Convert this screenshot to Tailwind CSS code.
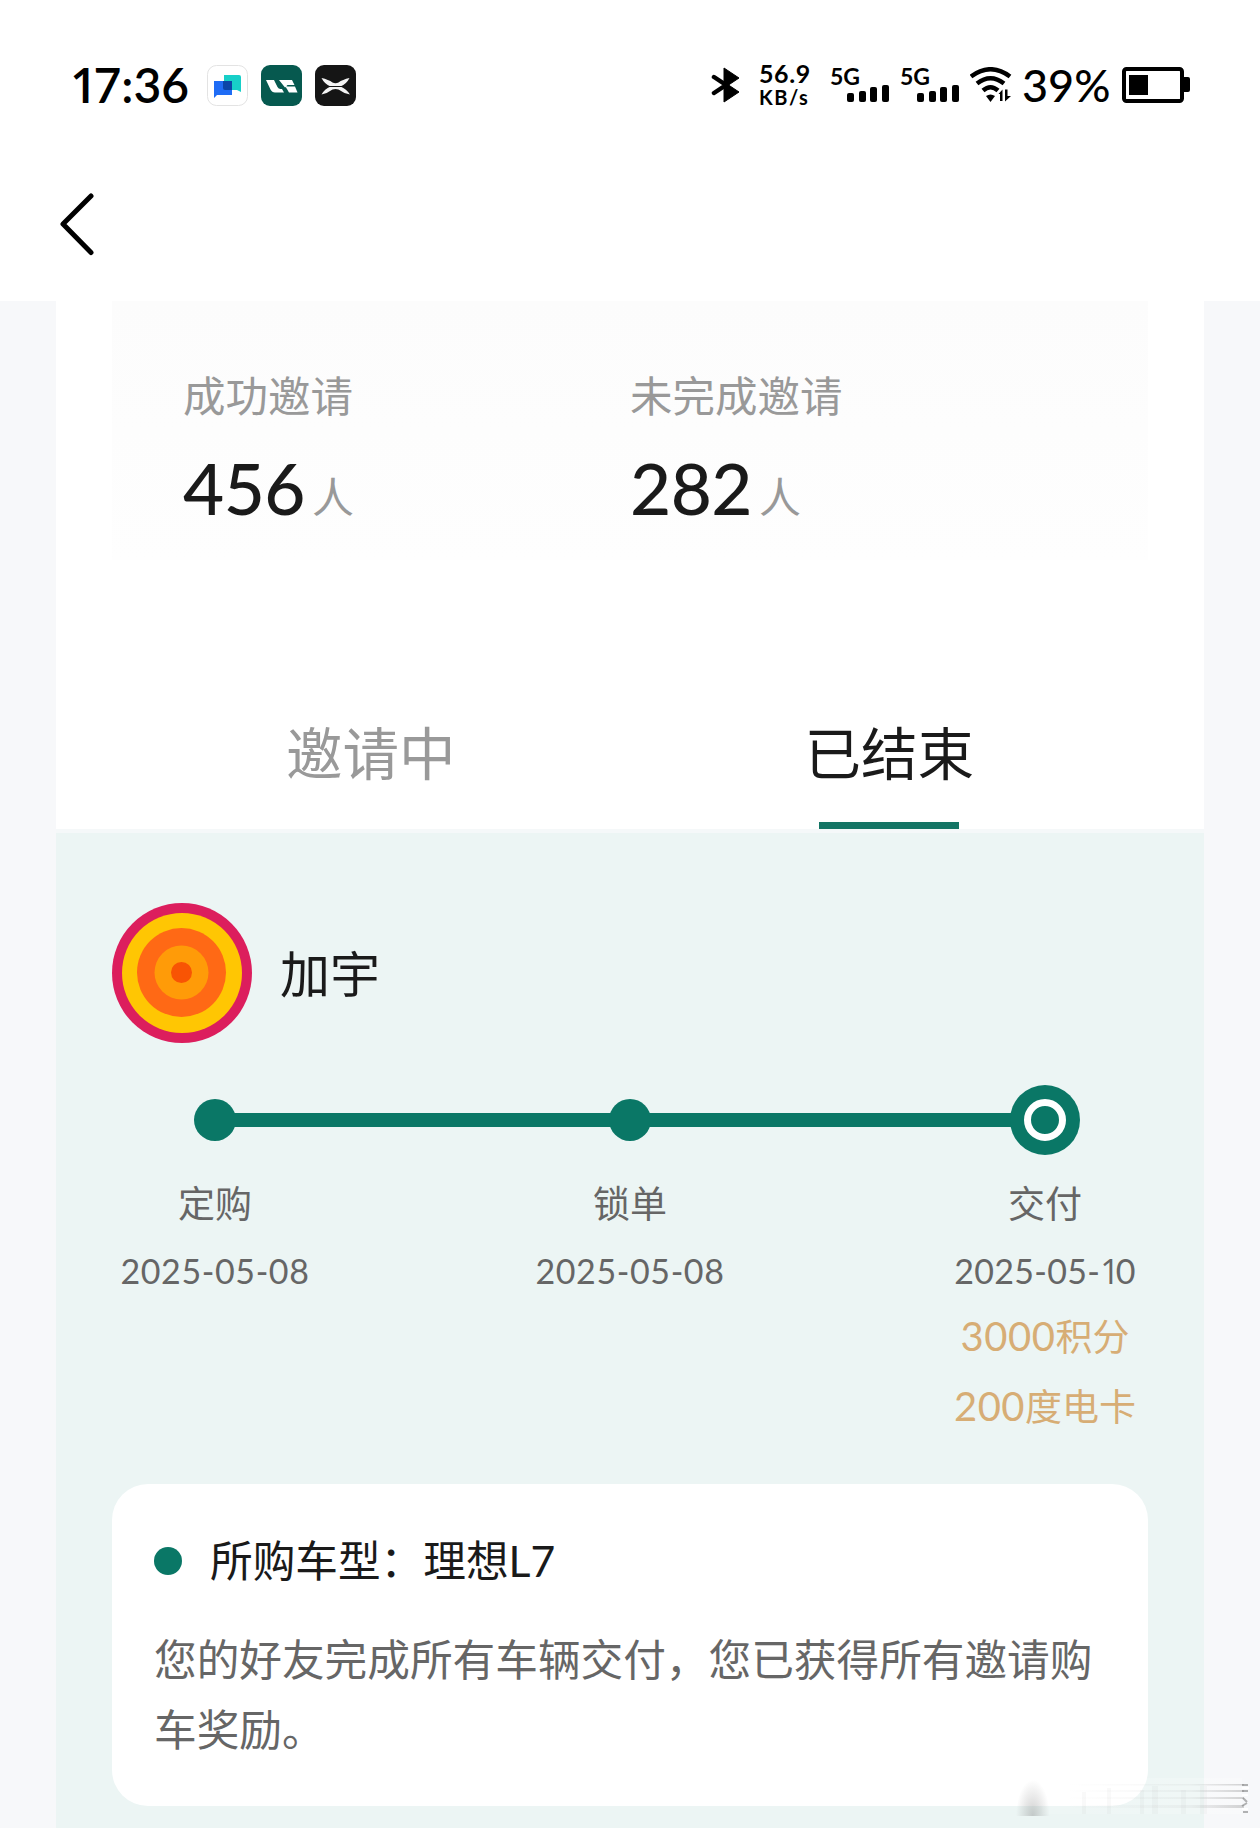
<!DOCTYPE html>
<html lang="zh-CN">
<head>
  <meta charset="UTF-8" />
  <title>邀请记录</title>
  <script src="https://cdn.jsdelivr.net/npm/@tailwindcss/browser@4"></script>
</head>
<body class="relative h-[1828px] w-[1260px] overflow-hidden bg-[#f7f8fa] font-['Lato','Noto_Sans_CJK_SC',sans-serif] text-[#1a1a1a]">

  <!-- header -->
  <header class="h-[301px] bg-white">
    <div class="flex h-[170px] items-center justify-between pr-[70px] pl-[70px] text-black">
      <div class="flex items-center">
        <span class="w-[137px] text-[48px] leading-none font-semibold whitespace-nowrap"><span class="font-['Open_Sans'] tracking-[-4px]">1</span>7:36</span>
        <div class="flex gap-[13px]">
          <svg class="size-[41px]" viewBox="0 0 41 41">
            <rect x="0.5" y="0.5" width="40" height="40" rx="9" fill="#fff" stroke="#e3e3e3" />
            <path d="M17 10H32q2 0 2 2V27l-4-2H17Z" fill="#17cfc8" />
            <path d="M7 16H25V30H10l-3 3Z" fill="#1f6cf5" />
            <path d="M16 16H25V25H18q-2 0-2-2Z" fill="#0b46a8" />
          </svg>
          <svg class="size-[41px]" viewBox="0 0 41 41">
            <rect width="41" height="41" rx="9" fill="#06594f" />
            <path d="M5 15h8l3.500 7q1 2 3 2h1.500l2 3.500h-9q-3 0-4.500-3Z" fill="#fff" />
            <path d="M18 15h13l2.500 5h-8l1 1-2.500 1.500Z" fill="#fff" />
            <path d="M24.500 21.500h9.500L36.500 27.500H28Z" fill="#fff" />
          </svg>
          <svg class="size-[41px]" viewBox="0 0 41 41">
            <rect width="41" height="41" rx="9" fill="#151515" />
            <path d="M6.500 13q7 1.500 11 4.500 3 1.500 6 0 4-3 11-4.500-3 6-9 8.500 6 2.500 9.500 8-7-1.500-11.500-5-3-1-6 0-4.500 3.500-11 5 3-5.500 9-8-6-2.500-9-8.500Z" fill="#f4f4f4" />
            <path d="M14 21.500h13" stroke="#151515" stroke-width="1" />
          </svg>
        </div>
      </div>

      <div class="flex items-center">
        <svg class="mr-[18px] h-9 w-[30px]" viewBox="0 0 30 36">
          <path d="M13 1 28 11 17.500 18 28 25 13 35Z" fill="#000" stroke="#000" stroke-linejoin="round" />
          <path d="M3 10 15 18 3 26" fill="none" stroke="#000" stroke-width="4.500" stroke-linecap="round" />
        </svg>
        <div class="w-[71px] font-bold">
          <div class="text-[25px] leading-[23px] tracking-[0.6px]">56.9</div>
          <div class="text-[20px] leading-[24px] tracking-[1.5px]">KB/s</div>
        </div>
        <div class="flex w-[140px]">
          <div class="h-9 w-[70px]">
            <div class="text-[23px] leading-[19px] font-bold">5G</div>
            <div class="flex h-4 items-end gap-[4.500px] pl-[17px]">
              <i class="h-[9px] w-[7px] rounded-xs bg-black"></i><i class="h-[11px] w-[7px] rounded-xs bg-black"></i><i class="h-[15px] w-[7px] rounded-xs bg-black"></i><i class="h-[17px] w-[7px] rounded-xs bg-black"></i>
            </div>
          </div>
          <div class="h-9 w-[70px]">
            <div class="text-[23px] leading-[19px] font-bold">5G</div>
            <div class="flex h-4 items-end gap-[4.500px] pl-[17px]">
              <i class="h-[9px] w-[7px] rounded-xs bg-black"></i><i class="h-[11px] w-[7px] rounded-xs bg-black"></i><i class="h-[15px] w-[7px] rounded-xs bg-black"></i><i class="h-[17px] w-[7px] rounded-xs bg-black"></i>
            </div>
          </div>
        </div>
        <svg class="h-9 w-[42px]" viewBox="0 0 42 36">
          <g fill="none" stroke="#000" stroke-width="4.500">
            <path d="M1 9.500Q20.500-5 40 9.500" />
            <path d="M7 16.500Q20.500 6 34 16.500" />
            <path d="M13 23.500Q20.500 17 28 23.500" />
          </g>
          <path d="M16 29q4.500-3 9 0l-4.500 6Z" />
          <path d="M28.500 27 32.500 22.500V34H30V27ZM35 22.500h2.500V29H41L35 34.500Z" />
        </svg>
        <span class="ml-2.5 w-[100px] text-[45px] leading-none font-medium">39%</span>
        <svg class="h-9 w-[68px]" viewBox="0 0 68 36">
          <rect x="2" y="2" width="58" height="32" rx="2.500" fill="none" stroke="#000" stroke-width="4" />
          <rect x="7" y="8" width="19" height="20" />
          <path d="M62 10h4q2 0 2 2V23q0 2-2 2H62Z" />
        </svg>
      </div>
    </div>
    <svg class="mt-[22px] ml-14 h-16 w-10" viewBox="0 0 40 64" fill="none" stroke="#000" stroke-width="5" stroke-linecap="round" stroke-linejoin="round">
      <path d="M35 4 7 32 35 60.500" />
    </svg>
  </header>

  <main class="mx-14 bg-white">
    <!-- stats -->
    <section class="mx-14 flex h-[259px] bg-linear-to-b from-[#fcfcfc] to-[#fefefe] pt-[65px] pl-[71px]">
      <div class="w-[447px]">
        <p class="text-[42.500px] leading-[60px] text-[#999]">成功邀请</p>
        <p class="mt-[22px] flex items-baseline gap-[7px] leading-[80px]">
          <span class="text-[71px] font-medium tracking-[-0.5px]">456</span>
          <span class="text-[42px] text-[#999] -translate-y-0.5">人</span>
        </p>
      </div>
      <div>
        <p class="text-[42.500px] leading-[60px] text-[#999]">未完成邀请</p>
        <p class="mt-[22px] flex items-baseline gap-[7px] leading-[80px]">
          <span class="text-[71px] font-medium tracking-[-0.5px]">282</span>
          <span class="text-[42px] text-[#999] -translate-y-0.5">人</span>
        </p>
      </div>
    </section>

    <!-- tabs -->
    <nav class="mx-14 flex h-[269px] items-end text-[56.500px] leading-[80px]">
      <div class="flex flex-1 flex-col items-center pr-px pb-9 text-[#999]">邀请中</div>
      <div class="flex flex-1 flex-col items-center gap-[29px]">
        <span>已结束</span>
        <span class="h-[7px] w-[140px] bg-[#147565]"></span>
      </div>
    </nav>

    <section class="h-[1000px] border-t-4 border-[#f5f8f9] bg-[#ecf5f4] px-14 pt-[70px]">
      <div class="flex items-center gap-7">
        <svg class="size-[140px]" viewBox="0 0 140 140">
          <circle cx="70" cy="70" r="70" fill="#dc1e5d" />
          <circle cx="70" cy="70" r="60" fill="#ffc603" />
          <circle cx="69.500" cy="69.500" r="44.500" fill="#ff6915" />
          <circle cx="69.500" cy="69.500" r="27" fill="#ff9b08" />
          <circle cx="69.500" cy="69.500" r="10.500" fill="#f85404" />
        </svg>
        <span class="pt-0.5 text-[50px]">加宇</span>
      </div>

      <!-- progress -->
      <div class="mt-[42px] flex items-center pr-[68px] pl-[82px]">
        <span class="size-[42px] rounded-full bg-[#0a7766]"></span>
        <span class="-mx-1.5 h-3.5 w-[385px] bg-[#0a7766]"></span>
        <span class="size-[42px] rounded-full bg-[#0a7766]"></span>
        <span class="-mx-1.5 h-3.5 flex-1 bg-[#0a7766]"></span>
        <span class="flex size-[70px] items-center justify-center rounded-full bg-[#0a7766]">
          <span class="size-[42px] rounded-full border-7 border-white"></span>
        </span>
      </div>
      <div class="mt-[23px] flex justify-between text-center text-[#666]">
        <div class="w-[206px]">
          <p class="text-[37px] leading-[52px]">定购</p>
          <p class="mt-4 text-[34px] leading-[50px] tracking-[0.6px]">2025-05-08</p>
        </div>
        <div class="w-[206px]">
          <p class="text-[37px] leading-[52px]">锁单</p>
          <p class="mt-4 text-[34px] leading-[50px] tracking-[0.6px]">2025-05-08</p>
        </div>
        <div class="w-[206px]">
          <p class="text-[37px] leading-[52px]">交付</p>
          <p class="mt-4 text-[34px] leading-[50px] tracking-[0.3px]">2025-05-<span class="font-['Open_Sans'] tracking-[-4px]">1</span>0</p>
          <p class="mt-[5px] h-[70px] text-[37px] leading-[70px] text-[#d7ad75]"><span class="text-[40px] tracking-[0.5px]">3000</span>积分</p>
          <p class="h-[70px] text-[37px] leading-[70px] text-[#d7ad75]"><span class="text-[40px] tracking-[0.5px]">200</span>度电卡</p>
        </div>
      </div>

      <!-- order card -->
      <div class="mt-[43px] rounded-[36px] bg-white px-[42px] pt-[47px] pb-[41px] text-[42.660px]">
        <div class="flex items-center gap-7 leading-[60px]">
          <span class="size-7 rounded-full bg-[#0a7766]"></span>
          <span>所购车型：理想L7</span>
        </div>
        <p class="mt-[34px] leading-[70px] text-[#666]">您的好友完成所有车辆交付，您已获得所有邀请购车奖励。</p>
      </div>
    </section>
  </main>

  <!-- faded watermark -->
  <svg class="absolute top-[1770px] left-[1016px] h-[50px] w-[240px]" viewBox="0 0 240 50">
    <defs>
      <linearGradient id="fade"><stop stop-color="#888" stop-opacity="0" /><stop offset=".7" stop-color="#888" stop-opacity=".08" /><stop offset="1" stop-color="#888" stop-opacity=".35" /></linearGradient>
      <linearGradient id="veil"><stop stop-color="#fff" stop-opacity=".1" /><stop offset="1" stop-color="#fff" stop-opacity=".25" /></linearGradient>
      <radialGradient id="smudge" cy="1" r=".9" gradientTransform="translate(.22 0) scale(.55 1)"><stop stop-color="#777" stop-opacity=".35" /><stop offset="1" stop-color="#777" stop-opacity="0" /></radialGradient>
    </defs>
    <rect x="26" y="8" width="200" height="36" fill="url(#veil)" />
    <rect x="0" y="6" width="34" height="40" fill="url(#smudge)" />
    <g fill="url(#fade)">
      <rect x="50" y="14" width="178" height="1.500" /><rect x="50" y="20" width="178" height="2" /><rect x="50" y="27" width="178" height="2" /><rect x="50" y="35" width="178" height="3" />
    </g>
    <g fill="#999" fill-opacity=".06">
      <rect x="66" y="22" width="4" height="22" /><rect x="91" y="18" width="4" height="26" /><rect x="124" y="20" width="4" height="24" /><rect x="136" y="16" width="6" height="28" /><rect x="165" y="20" width="5" height="24" /><rect x="184" y="16" width="7" height="28" />
    </g>
    <path d="M226 15h6M226 21h6M227 28l4 4M226 36l5-3M227 42h5" fill="none" stroke="#777" stroke-opacity=".55" stroke-width="2" />
    <path d="M226 18h7M226 25h6M226 39h6" stroke="#fff" stroke-width="2" />
  </svg>

</body>
</html>
